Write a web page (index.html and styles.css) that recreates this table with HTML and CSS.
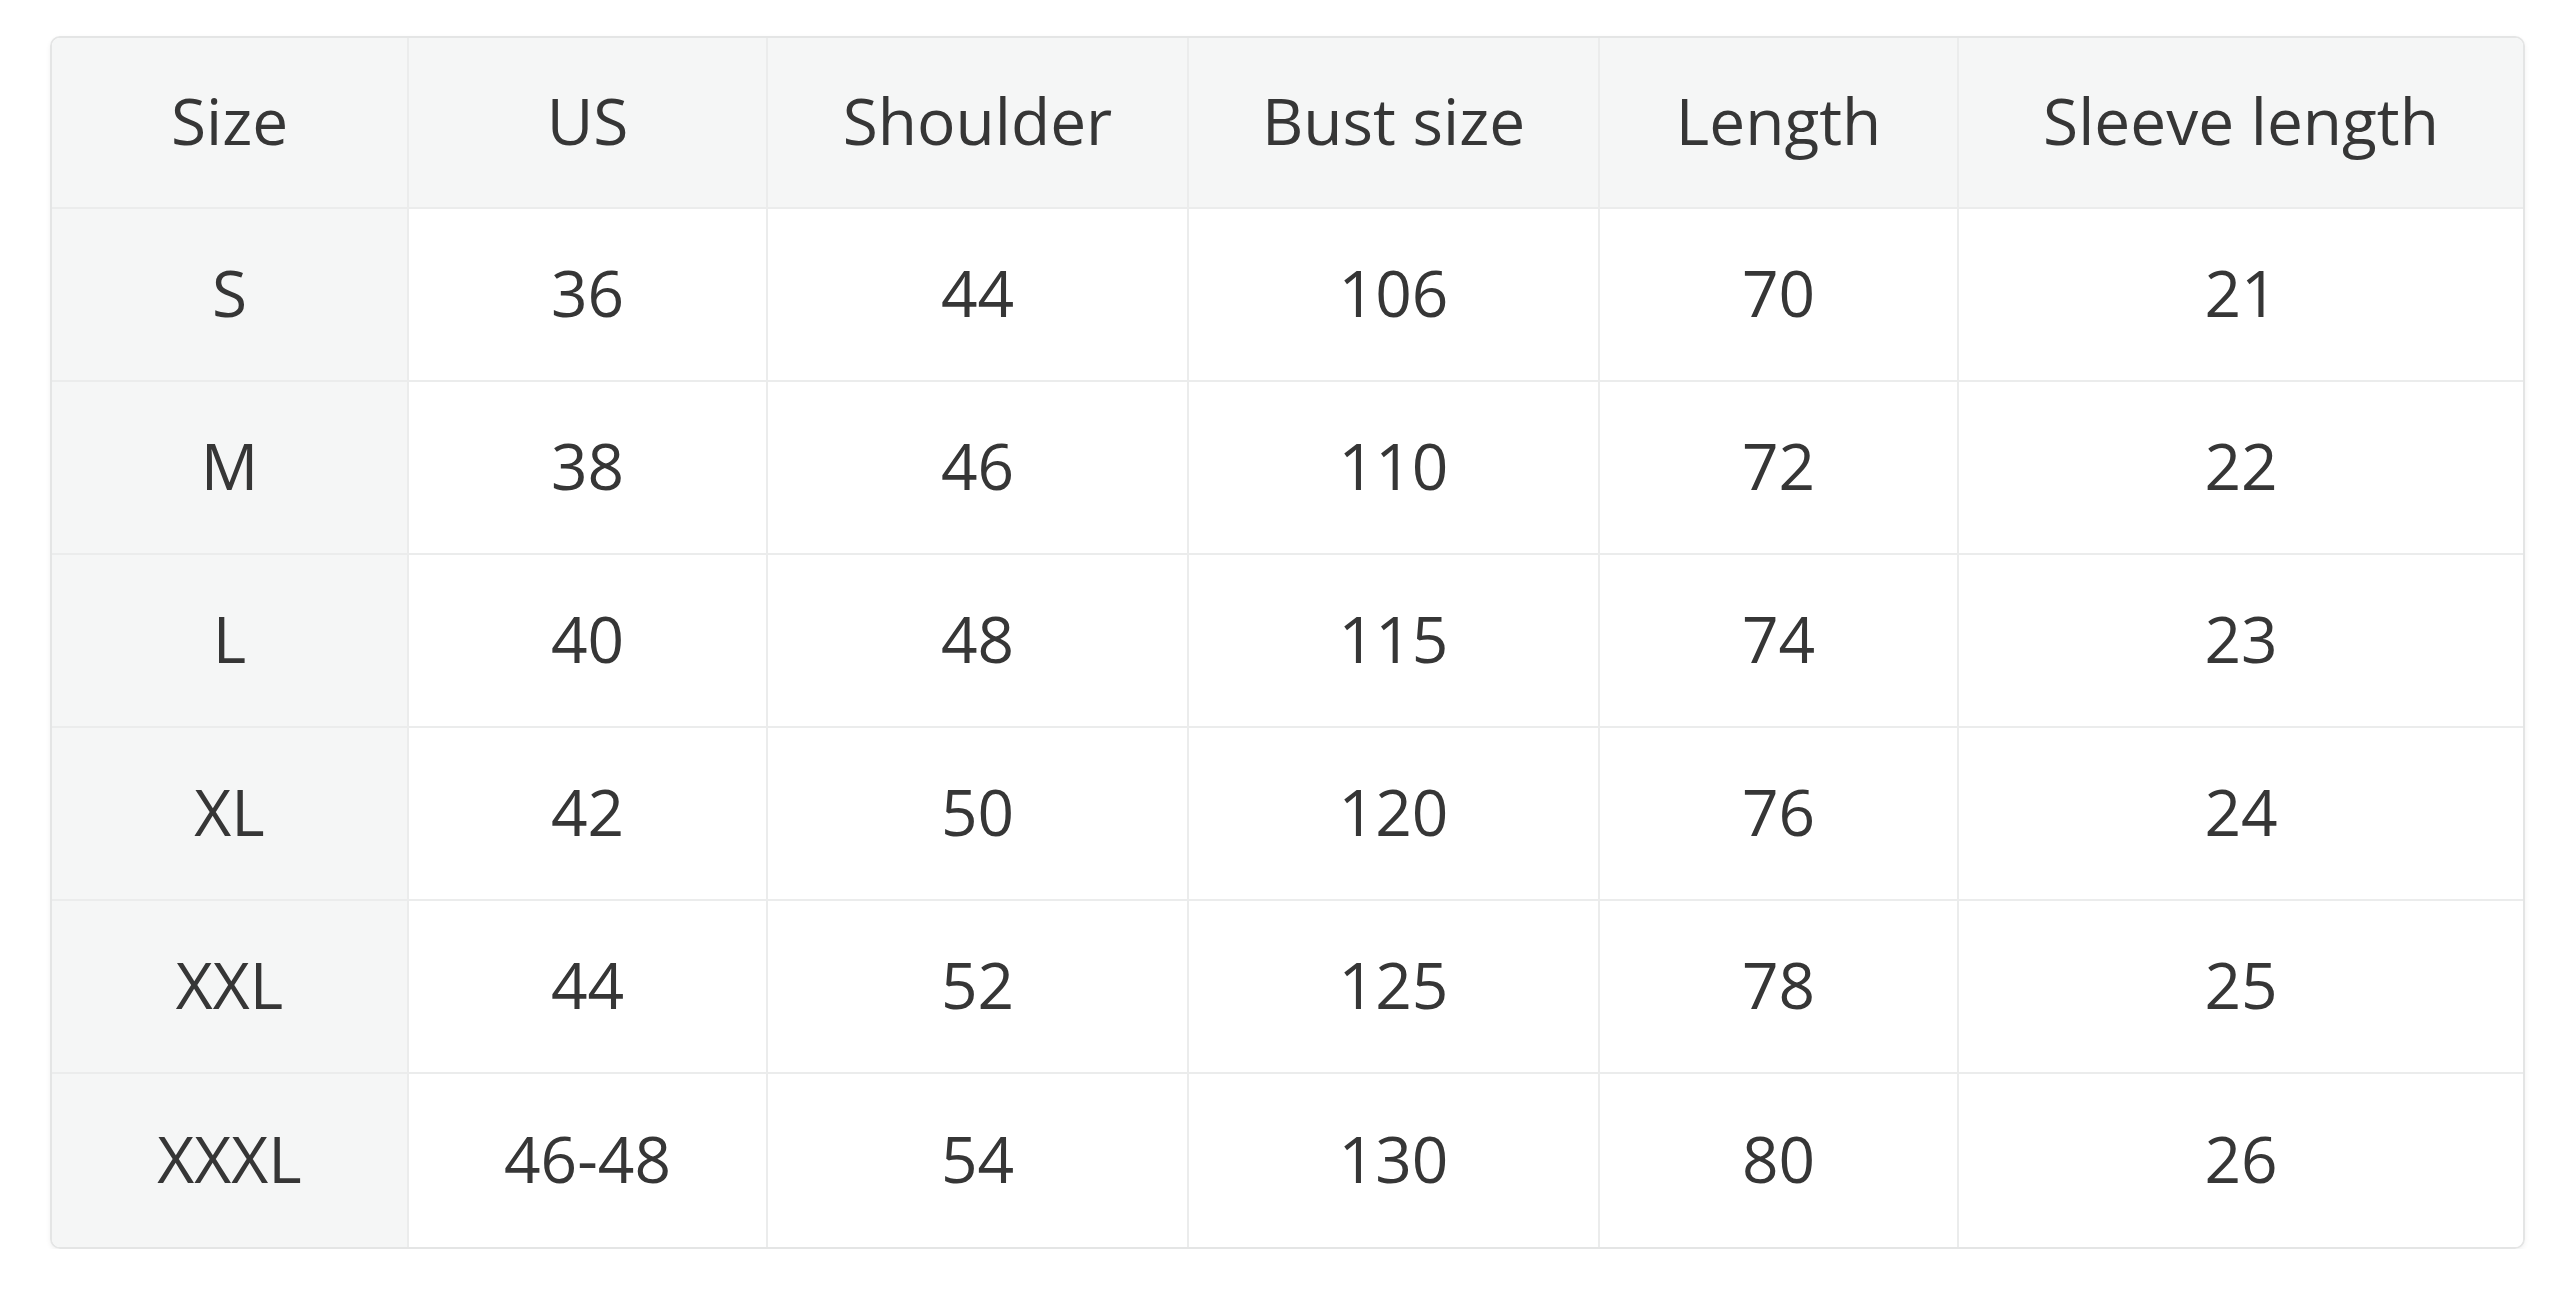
FILE: index.html
```html
<!DOCTYPE html>
<html lang="en">
<head>
<meta charset="utf-8">
<title>Size chart</title>
<link rel="stylesheet" href="styles.css">
</head>
<body>
<div class="chart">
  <table class="size-table">
    <colgroup>
      <col class="c-size">
      <col class="c-us">
      <col class="c-shoulder">
      <col class="c-bust">
      <col class="c-length">
      <col class="c-sleeve">
    </colgroup>
    <thead>
      <tr><th>Size</th><th>US</th><th>Shoulder</th><th>Bust size</th><th>Length</th><th>Sleeve length</th></tr>
    </thead>
    <tbody>
      <tr><th>S</th><td>36</td><td>44</td><td>106</td><td>70</td><td>21</td></tr>
      <tr><th>M</th><td>38</td><td>46</td><td>110</td><td>72</td><td>22</td></tr>
      <tr><th>L</th><td>40</td><td>48</td><td>115</td><td>74</td><td>23</td></tr>
      <tr><th>XL</th><td>42</td><td>50</td><td>120</td><td>76</td><td>24</td></tr>
      <tr><th>XXL</th><td>44</td><td>52</td><td>125</td><td>78</td><td>25</td></tr>
      <tr><th>XXXL</th><td>46-48</td><td>54</td><td>130</td><td>80</td><td>26</td></tr>
    </tbody>
  </table>
</div>
</body>
</html>
```
FILE: styles.css
```css
html, body {
  margin: 0;
  padding: 0;
  background: #ffffff;
}

body {
  padding: 36px 0 0 50px;
  font-family: "Open Sans", "Noto Sans", "Liberation Sans", sans-serif;
  color: #333333;
}

.chart {
  width: 2475px;
  box-sizing: border-box;
  border: 2px solid #e4e5e5;
  border-radius: 10px;
  overflow: hidden;
  box-shadow: 0 2px 5px rgba(0, 0, 0, 0.06);
}

.size-table {
  width: 100%;
  table-layout: fixed;
  border-collapse: separate;
  border-spacing: 0;
}

.c-size { width: 357px; }
.c-us { width: 359px; }
.c-shoulder { width: 421px; }
.c-bust { width: 411px; }
.c-length { width: 359px; }
.c-sleeve { width: 564px; }

.size-table th,
.size-table td {
  height: 173px;
  box-sizing: border-box;
  padding: 0 0 5px 0;
  text-align: center;
  vertical-align: middle;
  font-size: 64px;
  font-weight: 400;
  color: #363636;
  border-right: 2px solid #ebecec;
  border-bottom: 2px solid #ebecec;
  background: #ffffff;
}

.size-table thead th {
  height: 171px;
  background: #f5f6f6;
}

.size-table tbody th {
  background: #f5f6f6;
}

.size-table tr > :last-child {
  border-right: none;
}

.size-table tbody tr:last-child > * {
  border-bottom: none;
}
```
